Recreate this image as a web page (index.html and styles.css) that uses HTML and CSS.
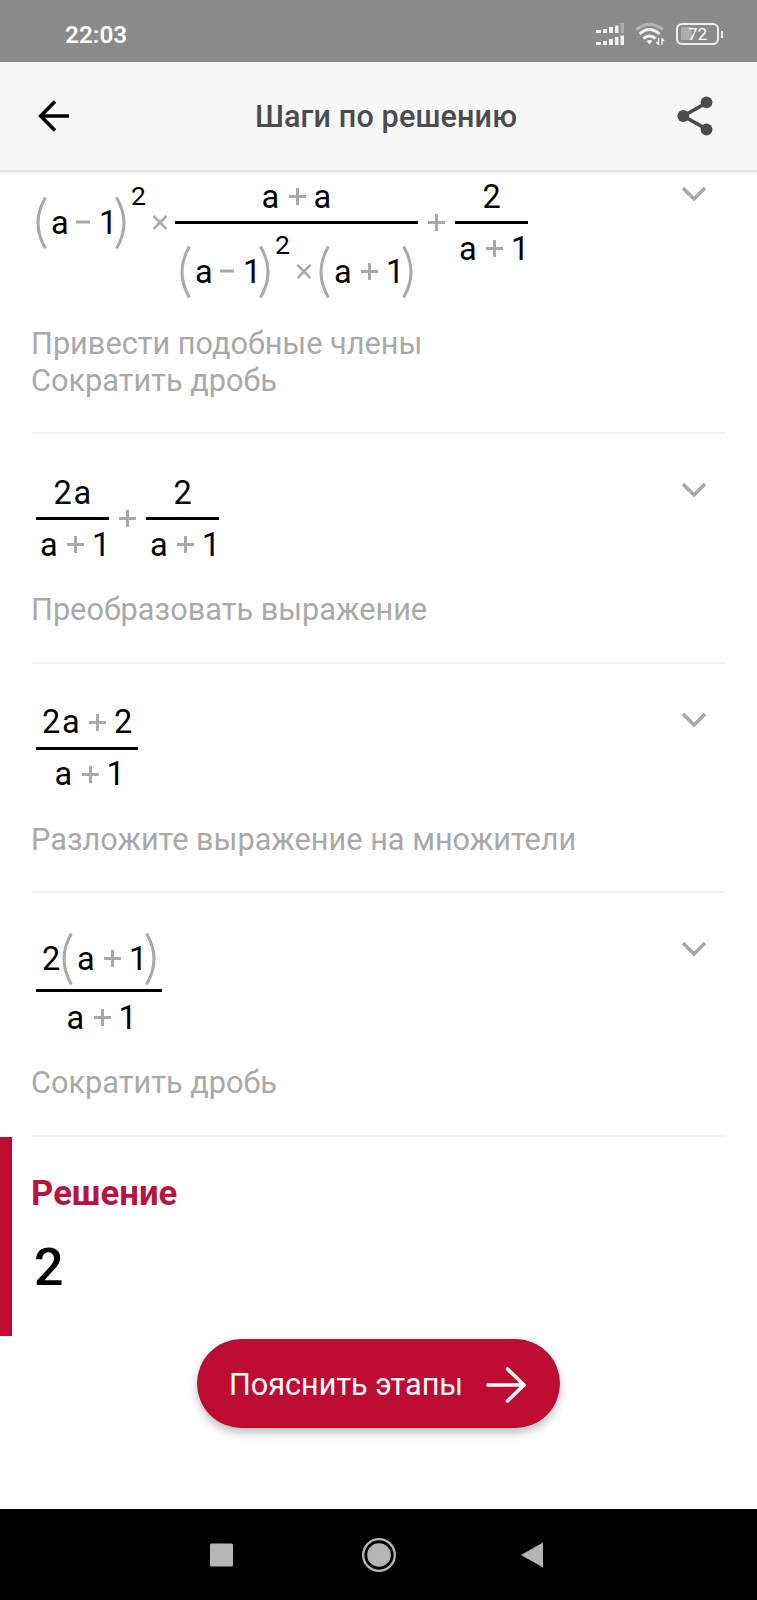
FILE: index.html
```html
<!DOCTYPE html>
<html lang="ru">
<head>
    <meta charset="UTF-8">
    <meta name="viewport" content="width=device-width, initial-scale=1.0">
    <title>Шаги по решению</title>
    <link rel="stylesheet" href="styles.css">
</head>
<body>

    <!-- shared shapes -->
    <svg class="defs" width="0" height="0">
        <symbol id="open" viewBox="0 0 11 52"><path d="M9.5 .5Q-5.500 26 9.500 51.500"/></symbol>
        <symbol id="close" viewBox="0 0 11 52"><path d="M1.500 .5Q16.500 26 1.500 51.500"/></symbol>
        <symbol id="plus" viewBox="0 0 17 17"><path d="M0 8.500H17M8.500 0V17"/></symbol>
        <symbol id="minus" viewBox="0 0 14 17"><path d="M0 8H14"/></symbol>
        <symbol id="times" viewBox="0 0 14 17"><path d="M.5 2L13.500 15M13.500 2L.5 15"/></symbol>
        <symbol id="chevron" viewBox="0 0 26 16"><path d="M2 2L13 13L24 2"/></symbol>
    </svg>

    <div class="statusbar">
        <span class="time">22:03</span>
        <div class="indicators">
            <svg width="29" height="23" viewBox="0 0 29 23" fill="#f0f0f0">
                <path d="M0 7h5v3H0zM7 6h4v4H7zM13 4h4v6h-4zM19 2.500h3.500V10H19z"/>
                <path d="M24.500 0H28v10h-3.500z" fill="#adadad"/>
                <path d="M0 19h5v3H0zM7 18h4v4H7zM13 16h4v6h-4zM19 14h3.500v8H19zM24.500 12.500H28V22h-3.500z"/>
            </svg>
            <svg class="wifi" width="30" height="24" viewBox="0 0 30 24" fill="none" stroke="#f0f0f0" stroke-width="3">
                <path d="M1.500 7.500Q14.500-3 28 7.500" stroke="#b3b3b3"/>
                <path d="M4.500 12Q14.500 3 24.500 12"/>
                <path d="M8.500 16.500Q14.500 11.500 20.500 16.500"/>
                <path d="M11.500 19L14.500 22.500L17.500 19Q14.500 17 11.500 19z" fill="#f0f0f0" stroke="none"/>
                <path d="M23.500 16v7M21.500 20l2 2.500M27 23v-7M27 16.500l2 2.500" stroke-width="1.400"/>
            </svg>
            <div class="battery"><span>72</span></div>
            <i class="battery-tip"></i>
        </div>
    </div>

    <header class="header">
        <svg width="32" height="32" viewBox="0 0 32 32" fill="none" stroke="#000" stroke-width="3.600">
            <path d="M17 1.500L2.700 16L17 30.500M3 16H31"/>
        </svg>
        <h1>Шаги по решению</h1>
        <svg width="36" height="40" viewBox="0 0 36 40" fill="#4b4b50">
            <path d="M30 6.500L6.500 20L30 33.500" fill="none" stroke="#4b4b50" stroke-width="3.600"/>
            <circle cx="29.500" cy="6.300" r="5.900"/>
            <circle cx="6.300" cy="20" r="5.900"/>
            <circle cx="29.500" cy="33.500" r="5.900"/>
        </svg>
    </header>

    <main>
        <section class="step first">
            <div class="row">
                <div class="formula">
                    <div class="term">
                        <svg class="paren"><use href="#open"/></svg><b>a</b><svg class="minus"><use href="#minus"/></svg><b class="one">1</b><svg class="paren right"><use href="#close"/></svg><sup>2</sup><svg class="times"><use href="#times"/></svg>
                    </div>
                    <div class="frac">
                        <div class="num"><b>a</b><svg class="plus"><use href="#plus"/></svg><b class="end">a</b></div>
                        <div class="den power">
                            <svg class="paren"><use href="#open"/></svg><b>a</b><svg class="minus"><use href="#minus"/></svg><b class="one">1</b><svg class="paren right"><use href="#close"/></svg><sup>2</sup><svg class="times"><use href="#times"/></svg><svg class="paren"><use href="#open"/></svg><b>a</b><svg class="plus"><use href="#plus"/></svg><b class="one">1</b><svg class="paren right"><use href="#close"/></svg>
                        </div>
                    </div>
                    <div class="term between"><svg class="plus"><use href="#plus"/></svg></div>
                    <div class="frac">
                        <div class="num"><b class="end">2</b></div>
                        <div class="den"><b>a</b><svg class="plus"><use href="#plus"/></svg><b class="one">1</b></div>
                    </div>
                </div>
                <svg class="chevron"><use href="#chevron"/></svg>
            </div>
            <p class="hint">Привести подобные члены<br>Сократить дробь</p>
        </section>

        <section class="step">
            <div class="row">
                <div class="formula">
                    <div class="frac">
                        <div class="num"><b>2</b><b class="end">a</b></div>
                        <div class="den"><b>a</b><svg class="plus"><use href="#plus"/></svg><b class="one">1</b></div>
                    </div>
                    <div class="term between"><svg class="plus"><use href="#plus"/></svg></div>
                    <div class="frac">
                        <div class="num"><b class="end">2</b></div>
                        <div class="den"><b>a</b><svg class="plus"><use href="#plus"/></svg><b class="one">1</b></div>
                    </div>
                </div>
                <svg class="chevron"><use href="#chevron"/></svg>
            </div>
            <p class="hint">Преобразовать выражение</p>
        </section>

        <section class="step">
            <div class="row">
                <div class="formula">
                    <div class="frac">
                        <div class="num"><b>2</b><b>a</b><svg class="plus"><use href="#plus"/></svg><b class="end">2</b></div>
                        <div class="den"><b>a</b><svg class="plus"><use href="#plus"/></svg><b class="one">1</b></div>
                    </div>
                </div>
                <svg class="chevron"><use href="#chevron"/></svg>
            </div>
            <p class="hint">Разложите выражение на множители</p>
        </section>

        <section class="step">
            <div class="row">
                <div class="formula">
                    <div class="frac">
                        <div class="num tall"><b>2</b><svg class="paren"><use href="#open"/></svg><b>a</b><svg class="plus"><use href="#plus"/></svg><b class="one">1</b><svg class="paren right"><use href="#close"/></svg></div>
                        <div class="den"><b>a</b><svg class="plus"><use href="#plus"/></svg><b class="one">1</b></div>
                    </div>
                </div>
                <svg class="chevron"><use href="#chevron"/></svg>
            </div>
            <p class="hint">Сократить дробь</p>
        </section>

        <section class="solution">
            <h2>Решение</h2>
            <div class="answer">2</div>
        </section>

        <button class="explain">
            Пояснить этапы
            <svg width="40" height="36" viewBox="0 0 40 36" fill="none" stroke="#fff" stroke-width="3.600" stroke-linecap="round" stroke-linejoin="round">
                <path d="M2 18H38M21.500 2L38 18L21.500 34"/>
            </svg>
        </button>
    </main>

    <nav class="navbar">
        <svg width="24" height="24" viewBox="0 0 24 24"><rect width="23" height="23" y=".5" rx="1.500" fill="#b5b5b5"/></svg>
        <svg class="home" width="34" height="34" viewBox="0 0 34 34">
            <circle cx="17" cy="17" r="15.800" fill="none" stroke="#b5b5b5" stroke-width="2.300"/>
            <circle cx="17" cy="17" r="11.800" fill="#b5b5b5"/>
        </svg>
        <svg width="24" height="26" viewBox="0 0 24 26"><path d="M1 13L23 .5V25.500z" fill="#b5b5b5"/></svg>
    </nav>

</body>
</html>
```

FILE: styles.css
```css
* {
    box-sizing: border-box;
}
body {
    margin: 0;
    height: 1600px;
    display: flex;
    flex-direction: column;
    font-family: Roboto, sans-serif;
    background-color: #fff;
    color: #000;
}
.defs {
    position: absolute;
}
svg {
    flex: none;
}

/* status bar */
.statusbar {
    height: 62px;
    flex: none;
    display: flex;
    justify-content: space-between;
    align-items: center;
    padding: 6px 34px 0 65px;
    background-color: #8b8b8b;
    color: #fff;
}
.time {
    font-size: 24.3px;
    font-weight: 600;
}
.indicators {
    display: flex;
    align-items: center;
}
.wifi {
    margin: 0 11px 0 10px;
}
.battery {
    width: 43px;
    height: 22px;
    border: 2.500px solid #f0f0f0;
    border-radius: 6px;
    padding: 2px 3px;
    background: linear-gradient(#adadad, #adadad) 3px 2px / 11px 13px no-repeat;
    font-size: 17px;
    line-height: 14px;
    text-align: center;
}
.battery-tip {
    width: 2px;
    height: 7px;
    margin-left: 2px;
    background-color: #f0f0f0;
}

/* header */
.header {
    height: 110px;
    flex: none;
    display: flex;
    justify-content: space-between;
    align-items: center;
    padding: 0 44px 1px 38px;
    background-color: #f7f7f7;
    border-bottom: 2px solid #e4e4e4;
    box-shadow: 0 1px 4px rgba(0, 0, 0, 0.08);
}
h1 {
    margin: 1px 0 0 25px;
    font-size: 30.5px;
    letter-spacing: 0.15px;
    font-weight: 500;
    color: #4b4b50;
}

/* steps */
main {
    flex: 1;
}
.step {
    margin: 0 32px;
    padding: 34px 0 33px;
    border-bottom: 2px solid #f1f1f1;
}
.first {
    padding-top: 0;
}
.row {
    display: flex;
    justify-content: space-between;
    align-items: flex-start;
    padding-left: 4px;
}
.chevron {
    width: 26px;
    height: 16px;
    margin: 14px 18px 0 0;
    fill: none;
    stroke: #a8a8a8;
    stroke-width: 3.500px;
}
.hint {
    margin: 23px 0 0 -1px;
    font-size: 30.7px;
    line-height: 36.5px;
    color: #a9a9a9;
}
.first .hint {
    margin-top: 7px;
}

/* formulas */
.formula {
    display: flex;
    align-items: flex-start;
    font-size: 32.5px;
    fill: none;
    stroke: #a9a9a9;
    stroke-width: 3px;
}
.formula b {
    width: 20px;
    font-weight: 400;
}
.formula .one {
    width: 13px;
}
.formula .end {
    width: 18px;
}
.formula sup {
    width: 17px;
    margin: 0 0 52px 5px;
    font-size: 26.5px;
    line-height: 1;
    vertical-align: baseline;
}
.term, .num, .den {
    display: flex;
    align-items: center;
    justify-content: center;
}
.term {
    height: 101px;
}
.num {
    height: 49px;
    padding: 0 6px;
}
.den {
    height: 49px;
    padding: 0 4px;
}
.tall {
    height: 61px;
    margin-top: 1px;
}
.tall + .den {
    height: 50px;
    padding-top: 1px;
}
.power {
    height: 95px;
    padding: 0 5px;
}
.frac .num {
    box-sizing: content-box;
    border-bottom: 3px solid #000;
}
.between {
    padding: 0 2px 0 3px;
}
.plus {
    width: 17px;
    height: 17px;
    margin: 0 8px 0 7px;
}
.minus {
    width: 14px;
    height: 17px;
    margin: 0 9px 0 5px;
}
.times {
    width: 14px;
    height: 17px;
    margin: 0 8px 0 5px;
    stroke-width: 2.500px;
}
.paren {
    width: 11px;
    height: 52px;
    margin-right: 4px;
}
.right {
    margin: 0 0 0 3px;
}

/* solution */
.solution {
    height: 199px;
    padding: 36px 0 0 20px;
    border-left: 12px solid #be0b32;
}
h2 {
    margin: 0 0 0 -1px;
    font-size: 34.7px;
    line-height: 40px;
    font-weight: 700;
    color: #b91440;
}
.answer {
    margin: 25px 0 0 2px;
    font-size: 52px;
    line-height: 60px;
    font-weight: 500;
}
.explain {
    display: flex;
    align-items: center;
    justify-content: space-between;
    width: 363px;
    height: 89px;
    margin: 3px auto 0;
    padding: 3px 34px 0 32px;
    border: 0;
    border-radius: 45px;
    background-color: #be0b32;
    box-shadow: 0 5px 9px rgba(0, 0, 0, 0.25);
    font-family: inherit;
    font-size: 30.6px;
    color: #fff;
}

/* android navigation */
.navbar {
    height: 91px;
    flex: none;
    display: flex;
    justify-content: space-between;
    align-items: center;
    padding: 0 213px 0 210px;
    background-color: #000;
}
.home {
    margin-left: 3px;
}
```
